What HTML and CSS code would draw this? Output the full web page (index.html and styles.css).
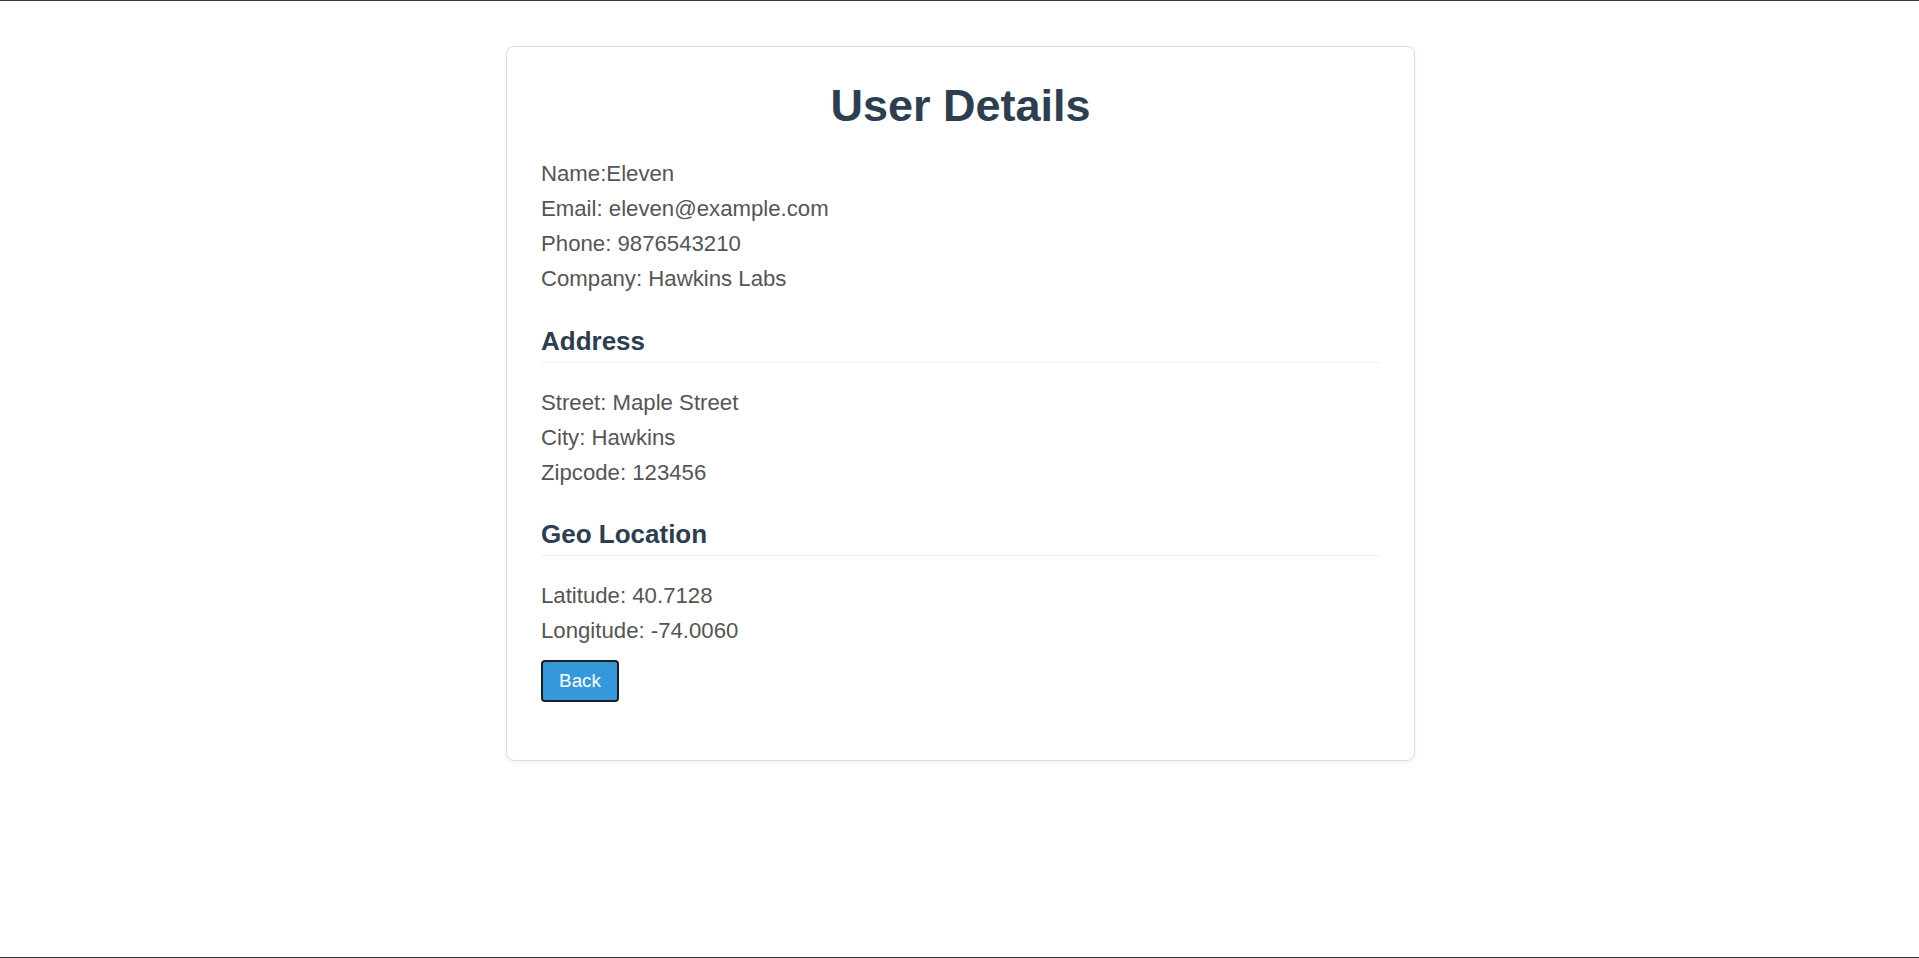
FILE: index.html
```html
<!DOCTYPE html>
<html lang="en">
<head>
<meta charset="utf-8">
<title>User Details</title>
<link rel="stylesheet" href="styles.css">
</head>
<body>
<div class="page">
  <div class="card">
    <h1 class="title">User Details</h1>
    <p class="row">Name:Eleven</p>
    <p class="row">Email: eleven@example.com</p>
    <p class="row">Phone: 9876543210</p>
    <p class="row">Company: Hawkins Labs</p>

    <h3 class="section">Address</h3>
    <div class="group">
      <p class="row">Street: Maple Street</p>
      <p class="row">City: Hawkins</p>
      <p class="row">Zipcode: 123456</p>
    </div>

    <h3 class="section">Geo Location</h3>
    <div class="group">
      <p class="row">Latitude: 40.7128</p>
      <p class="row">Longitude: -74.0060</p>
    </div>

    <button class="back" type="button">Back</button>
  </div>
</div>
</body>
</html>
```
FILE: styles.css
```css
html, body {
  margin: 0;
  padding: 0;
  background: #ffffff;
}

body {
  font-family: "Liberation Sans", Arial, sans-serif;
}

.page {
  box-sizing: border-box;
  height: 958px;
  border-top: 1px solid #3a3a3a;
  border-bottom: 1px solid #3a3a3a;
  padding-top: 45px;
  padding-left: 2px;
}

.card {
  box-sizing: border-box;
  width: 909px;
  margin: 0 auto;
  background: #ffffff;
  border: 1px solid #dddddd;
  border-radius: 8px;
  box-shadow: 0 2px 4px rgba(0, 0, 0, 0.05);
  padding: 33px 34px 24px;
}

.title {
  margin: 0 0 24px;
  font-size: 45px;
  line-height: 52px;
  font-weight: 700;
  text-align: center;
  color: #2c3e50;
}

.row {
  margin: 0;
  font-size: 22.2px;
  line-height: 35px;
  color: #555555;
}

.section {
  margin: 29.5px 0 0;
  padding-bottom: 5px;
  border-bottom: 1px solid #eeeeee;
  font-size: 26px;
  line-height: 31px;
  font-weight: 700;
  color: #2c3e50;
}

.group {
  padding-top: 22px;
}

.back {
  display: block;
  margin: 12px 0 34px;
  width: 78px;
  height: 42px;
  padding: 0;
  font-family: "Liberation Sans", Arial, sans-serif;
  font-size: 18.8px;
  color: #ffffff;
  background: #3498db;
  border: 2px solid #1f1f1f;
  border-radius: 4px;
  cursor: pointer;
}
```
